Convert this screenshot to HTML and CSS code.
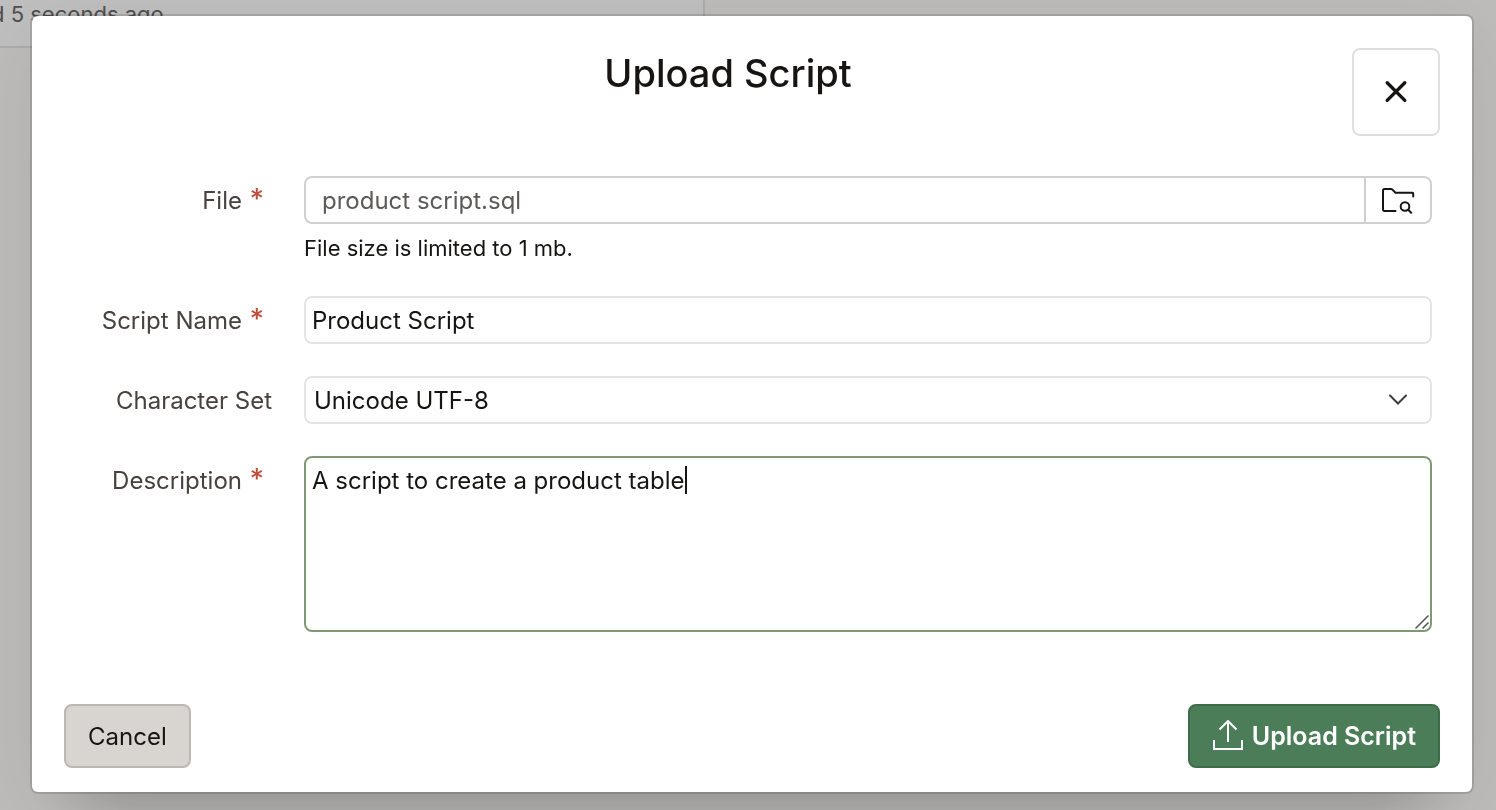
FILE: index.html
```html
<!DOCTYPE html>
<html lang="en">
<head>
  <meta charset="UTF-8">
  <title>Upload Script</title>
  <link rel="stylesheet" href="styles.css">
</head>
<body>
  <main class="page">
    <section class="card">
      <p class="card-note">d 5 seconds ago</p>
    </section>
  </main>

  <div class="overlay">
    <form class="dialog" role="dialog" aria-labelledby="dialogTitle">
      <header class="dialog-header">
        <h1 id="dialogTitle">Upload Script</h1>
        <button type="button" class="btn-close" aria-label="Close">
          <svg width="24" height="24" viewBox="0 0 24 24" fill="none" stroke="currentColor" stroke-width="3.400" stroke-linecap="round">
            <path d="M3.200 2.800l17.600 17.600M20.800 2.800L3.200 20.400"/>
          </svg>
        </button>
      </header>

      <div class="dialog-body">
        <div class="row">
          <label for="fileName" class="required">File</label>
          <div class="field">
            <div class="file-group">
              <input type="text" id="fileName" class="file-name" value="product script.sql" readonly>
              <button type="button" class="btn-browse" aria-label="Browse">
                <svg width="34" height="28" viewBox="0 0 34 28" fill="none" stroke="currentColor" stroke-width="2" stroke-linecap="round" stroke-linejoin="round">
                  <path d="M14.500 25H3.500a1.500 1.500 0 0 1-1.500-1.500V4.500A1.500 1.500 0 0 1 3.500 3H10q.8 0 1.400.6L14.500 6.700H31.500q.7 0 .7.7V10.500"/>
                  <circle cx="24" cy="20.500" r="4.300"/>
                  <path d="M27.200 23.700l3 3"/>
                </svg>
              </button>
            </div>
            <p class="help">File size is limited to 1 mb.</p>
          </div>
        </div>

        <div class="row">
          <label for="scriptName" class="required">Script Name</label>
          <input type="text" id="scriptName" class="text-box" value="Product Script">
        </div>

        <div class="row">
          <label for="charset">Character Set</label>
          <div class="select-wrap">
            <select id="charset" class="text-box">
              <option selected>Unicode UTF-8</option>
            </select>
            <svg class="chevron" width="20" height="12" viewBox="0 0 20 12" fill="none" stroke="currentColor" stroke-width="2" stroke-linecap="round">
              <path d="M2 1.500l8 8 8-8"/>
            </svg>
          </div>
        </div>

        <div class="row">
          <label for="description" class="required">Description</label>
          <div class="textarea-wrap">
            <textarea id="description" class="text-box" autofocus>A script to create a product table</textarea>
            <span class="caret"></span>
            <svg class="grip" width="16" height="16" viewBox="0 0 16 16" fill="none" stroke="currentColor" stroke-width="1.500">
              <path d="M1.500 14.500l13-13M8.500 14.500l6-6"/>
            </svg>
          </div>
        </div>
      </div>

      <footer class="dialog-footer">
        <button type="button" class="btn">Cancel</button>
        <button type="submit" class="btn btn-primary">
          <svg width="32" height="32" viewBox="0 0 32 32" fill="none" stroke="currentColor" stroke-width="2">
            <path d="M2 20v9h28v-9M16 22V1M7.500 9.500L16 1l8.500 8.500"/>
          </svg>
          Upload Script
        </button>
      </footer>
    </form>
  </div>
</body>
</html>
```

FILE: styles.css
```css
* {
  box-sizing: border-box;
}

body {
  margin: 0;
  min-height: 100vh;
  overflow: hidden;
  background: #bcbbb9;
  color: #161513;
  font-family: Inter, "Liberation Sans", sans-serif;
  font-size: 24px;
}

.card {
  width: 47.1%;
  height: 48px;
  background: #bebebe;
  border-right: 2px solid #acabaa;
  border-bottom: 2px solid #acabaa;
}

.card-note {
  margin: 0;
  margin-left: -9px;
  color: #4f4e4d;
  font-size: 22px;
  line-height: 28px;
}

.overlay {
  position: fixed;
  inset: 0;
  padding: 16px 24px 18px 32px;
}

.dialog {
  height: 100%;
  display: flex;
  flex-direction: column;
  background: #fff;
  border-radius: 6px;
  box-shadow:
    0 0 0 2px rgba(0, 0, 0, 0.13),
    0 16px 64px -12px rgba(0, 0, 0, 0.1),
    0 64px 60px -48px rgba(0, 0, 0, 0.18);
}

.dialog-header {
  display: flex;
  align-items: flex-start;
  padding: 32px 32px 0 72px;
}

h1 {
  flex: 1;
  margin: 0;
  text-align: center;
  font-size: 38px;
  font-weight: 500;
  line-height: 50px;
}

button {
  font: inherit;
  color: inherit;
  cursor: pointer;
}

.btn-close {
  width: 88px;
  height: 88px;
  display: flex;
  align-items: center;
  justify-content: center;
  background: #fff;
  border: 2px solid #dfdfdf;
  border-radius: 8px;
}

.dialog-body {
  flex: 1;
  display: flex;
  flex-direction: column;
  gap: 32px;
  padding: 40px 40px 0 32px;
}

.row {
  display: grid;
  grid-template-columns: 208px 1fr;
  column-gap: 32px;
}

label {
  height: 48px;
  color: #46423d;
  line-height: 50px;
  text-align: right;
}

.required {
  padding-right: 8px;
}

.required::after {
  content: " *";
  color: #bd4f3c;
  font-size: 28px;
  font-weight: 500;
  line-height: 0;
}

.text-box {
  display: block;
  width: 100%;
  height: 48px;
  padding: 0 6px;
  background: #fff;
  border: 2px solid #e4e4e4;
  border-radius: 8px;
  color: #161513;
  font: inherit;
  outline: none;
}

.file-group {
  display: flex;
  height: 48px;
  border: 2px solid #d0d0d0;
  border-radius: 8px;
}

.file-name {
  flex: 1;
  min-width: 0;
  padding: 0 16px;
  background: none;
  border: none;
  color: #5c5a58;
  font: inherit;
  outline: none;
}

.btn-browse {
  width: 66px;
  display: flex;
  align-items: center;
  justify-content: center;
  padding: 0;
  background: none;
  border: none;
  border-left: 2px solid #d0d0d0;
}

.help {
  margin: 0;
  padding-top: 8px;
  font-size: 22px;
  line-height: 32px;
}

.select-wrap,
.textarea-wrap {
  position: relative;
}

select.text-box {
  appearance: none;
  padding: 0 8px;
}

.chevron {
  position: absolute;
  top: 18px;
  right: 24px;
  color: #403e3c;
  pointer-events: none;
}

textarea.text-box {
  height: 176px;
  padding: 8px 6px;
  border-color: #7f9a73;
  line-height: 30px;
  caret-color: transparent;
  resize: none;
}

.caret {
  position: absolute;
  top: 10px;
  left: 381px;
  width: 2px;
  height: 28px;
  background: #161513;
  pointer-events: none;
}

.grip {
  position: absolute;
  right: 2px;
  bottom: 2px;
  color: #55534f;
  pointer-events: none;
}

.dialog-footer {
  display: flex;
  justify-content: space-between;
  padding: 24px 32px;
}

.btn {
  height: 64px;
  display: flex;
  align-items: center;
  gap: 8px;
  padding: 0 22px;
  background: #d8d4cf;
  border: 2px solid #bcb7b1;
  border-radius: 8px;
}

.btn-primary {
  background: #4b7e58;
  border-color: #3f6d4b;
  color: #fff;
  font-size: 25px;
  font-weight: 600;
}
```
